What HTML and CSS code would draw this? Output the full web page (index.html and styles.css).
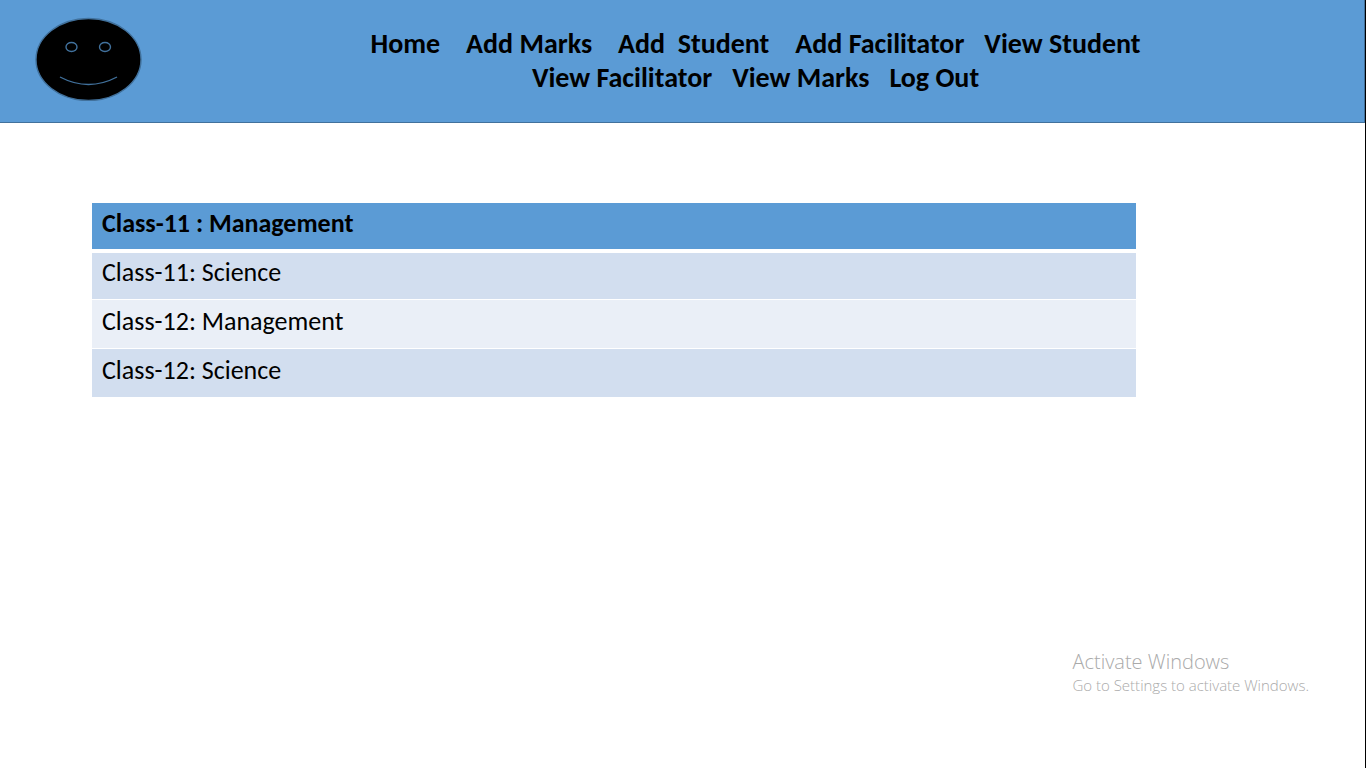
FILE: index.html
```
<!DOCTYPE html>
<html lang="en">
<head>
<meta charset="utf-8">
<title>Classes</title>
<link rel="stylesheet" href="styles.css">
</head>
<body>
<header class="header">
  <svg class="logo" viewBox="0 0 106 84" role="img" aria-label="Smiley logo">
    <ellipse class="face" cx="53" cy="42.500" rx="52.500" ry="41"/>
    <ellipse cx="36" cy="30" rx="5.500" ry="4.500"/>
    <ellipse cx="69.500" cy="30" rx="5.500" ry="4.500"/>
    <path d="M24.500 60Q53 75 81.500 60"/>
  </svg>
  <nav class="nav">
    <div class="nav-row">
      <a class="wide" href="#">Home</a>
      <a class="wide" href="#">Add Marks</a>
      <a class="wide" href="#">Add  Student</a>
      <a href="#">Add Facilitator</a>
      <a href="#">View Student</a>
    </div>
    <div class="nav-row">
      <a href="#">View Facilitator</a>
      <a href="#">View Marks</a>
      <a href="#">Log Out</a>
    </div>
  </nav>
</header>
<main class="main">
  <table class="classes">
    <thead>
      <tr><th scope="col">Class-11 : Management</th></tr>
    </thead>
    <tbody>
      <tr><td>Class-11: Science</td></tr>
      <tr><td>Class-12: Management</td></tr>
      <tr><td>Class-12: Science</td></tr>
    </tbody>
  </table>
</main>
<aside class="watermark">
  <p class="watermark-title">Activate Windows</p>
  <p class="watermark-text">Go to Settings to activate Windows.</p>
</aside>
</body>
</html>
```
FILE: styles.css
```
* { box-sizing: border-box; }

body {
  margin: 0;
  min-height: 100vh;
  display: flex;
  flex-direction: column;
  background: #fff;
  border-right: 1px solid #000;
  color: #000;
  font-family: Carlito, Lato, sans-serif;
}

.header {
  display: flex;
  align-items: center;
  padding: 17px 0 21px 35px;
  background: #5b9bd5;
  border: solid #41719c;
  border-width: 0 1px 1px 0;
}

.logo {
  width: 107px;
  height: 84px;
  fill: none;
  stroke: #41719c;
  stroke-width: 1.4;
}

.logo .face { fill: #000; }

.nav {
  flex: 1;
  padding: 10px 0 6px 5px;
}

.nav-row {
  display: flex;
  justify-content: center;
  gap: 20px;
  font-size: 28px;
  font-weight: 700;
  line-height: 34px;
}

.nav a {
  color: inherit;
  text-decoration: none;
  white-space: pre;
}

.nav .wide { margin-right: 6px; }

.main {
  flex: 1;
  padding: 80px 16.8% 0 92px;
}

.classes {
  width: 100%;
  border-spacing: 0;
  font-size: 26px;
  line-height: 28px;
}

.classes th,
.classes td {
  padding: 7px 10px 13px;
  text-align: left;
  border-bottom: 1px solid #fff;
}

.classes th {
  padding: 6px 10px 12px;
  background: #5b9bd5;
  border-bottom: 4px solid #fff;
}

.classes td { background: #d2deef; }
.classes tr:first-child td { padding-top: 5px; }
.classes tr:nth-child(even) td { background: #eaeff7; }

.watermark {
  align-self: flex-end;
  padding: 0 56px 72px 0;
  color: #aaa;
  font-family: "Open Sans", sans-serif;
  font-weight: 300;
}

.watermark p { margin: 0; }

.watermark-title {
  font-size: 20px;
  line-height: 24px;
}

.watermark-text {
  font-size: 15px;
  line-height: 22px;
}
```
